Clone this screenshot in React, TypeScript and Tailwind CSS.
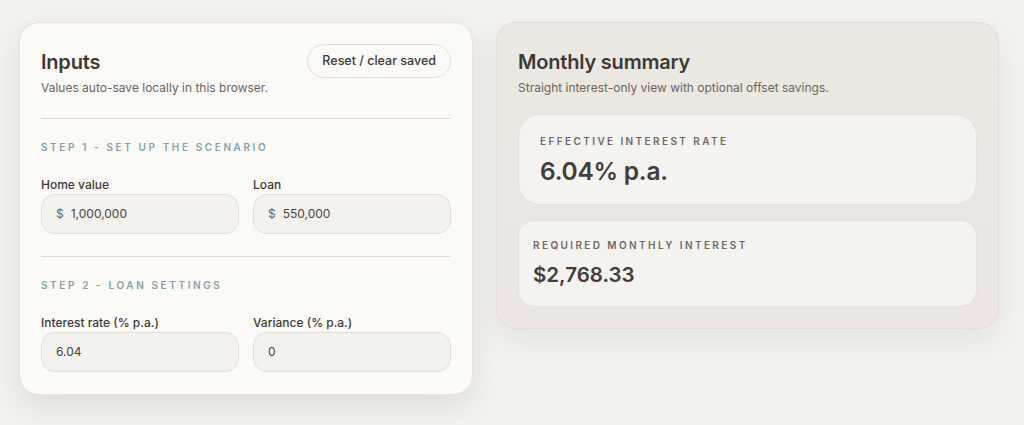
const Field = ({ label, value, prefix }: { label: string; value: string; prefix?: string }) => (
  <div className="flex flex-col">
    <label className="text-[12px] font-medium leading-4 text-[#3f3835]">{label}</label>
    <div className="mt-[1px] flex h-[40px] items-center rounded-[14px] border border-[#e2dfd9] bg-[#f3f2ee] px-[14px] text-[12px] text-[#4a4340]">
      {prefix && <span className="mr-[7px] text-[#6b6461]">{prefix}</span>}
      <span>{value}</span>
    </div>
  </div>
);

const StepLabel = ({ children }: { children: string }) => (
  <p className="text-[10px] font-semibold uppercase leading-4 tracking-[0.26em] text-[#86a2a5]">{children}</p>
);

export default function App() {
  return (
    <div
      className="min-h-[425px] bg-[#f3f2ee] px-[19px] pt-[22px] text-[#3f3835]"
      style={{ fontFamily: "Inter, 'Noto Sans', sans-serif" }}
    >
      <div className="grid grid-cols-[454px_503px] gap-[23px]">
        {/* Inputs */}
        <section className="self-start rounded-[20px] border border-[#e6e3de] bg-[#fbfaf7] px-[21px] pb-[22px] pt-[21px] shadow-[0_12px_30px_rgba(60,50,40,0.10)]">
          <div className="flex items-start justify-between">
            <div>
              <h2 className="pt-[4px] text-[20px] font-semibold leading-7 tracking-[-0.01em]">Inputs</h2>
              <p className="mt-[4px] text-[12px] leading-4 text-[#6b6461]">Values auto-save locally in this browser.</p>
            </div>
            <button className="h-[34px] rounded-full border border-[#e2dfd9] bg-[#fbfaf7] px-[14px] text-[12.5px] font-medium text-[#3f3835]">
              Reset / clear saved
            </button>
          </div>

          <div className="mt-[22px] border-t border-[#dedad4]" />

          <div className="mt-[20px]">
            <StepLabel>Step 1 - Set up the scenario</StepLabel>
            <div className="mt-[22px] grid grid-cols-2 gap-[14px]">
              <Field label="Home value" prefix="$" value="1,000,000" />
              <Field label="Loan" prefix="$" value="550,000" />
            </div>
          </div>

          <div className="mt-[22px] border-t border-[#dedad4]" />

          <div className="mt-[20px]">
            <StepLabel>Step 2 - Loan settings</StepLabel>
            <div className="mt-[22px] grid grid-cols-2 gap-[14px]">
              <Field label="Interest rate (% p.a.)" value="6.04" />
              <Field label="Variance (% p.a.)" value="0" />
            </div>
          </div>
        </section>

        {/* Summary */}
        <section className="self-start rounded-[20px] border border-[#e0dcd6] bg-gradient-to-b from-[#ebe8e2] to-[#ece5e1] px-[21px] pb-[21px] pt-[21px] shadow-[0_12px_30px_rgba(60,50,40,0.08)]">
          <h2 className="pt-[4px] text-[20px] font-semibold leading-7 tracking-[-0.01em]">Monthly summary</h2>
          <p className="mt-[4px] text-[12px] leading-4 text-[#6b6461]">Straight interest-only view with optional offset savings.</p>

          <div className="mt-[18px] flex flex-col gap-[15px]">
            <div className="rounded-[22px] border border-[#e4e1db] bg-[#f4f3ef] px-[21px] pb-[17px] pt-[18px]">
              <p className="text-[10px] font-semibold uppercase leading-4 tracking-[0.24em] text-[#6f6865]">Effective interest rate</p>
              <p className="mt-[6px] text-[24.5px] font-semibold leading-8 tracking-[-0.01em] text-[#433c39]">6.04% p.a.</p>
            </div>
            <div className="rounded-[16px] border border-[#e4e1db] bg-[#f4f3ef] px-[14px] pb-[17px] pt-[16px]">
              <p className="text-[10px] font-semibold uppercase leading-4 tracking-[0.24em] text-[#6f6865]">Required monthly interest</p>
              <p className="mt-[8px] text-[20.5px] font-semibold leading-7 text-[#433c39]">$2,768.33</p>
            </div>
          </div>
        </section>
      </div>
    </div>
  );
}
